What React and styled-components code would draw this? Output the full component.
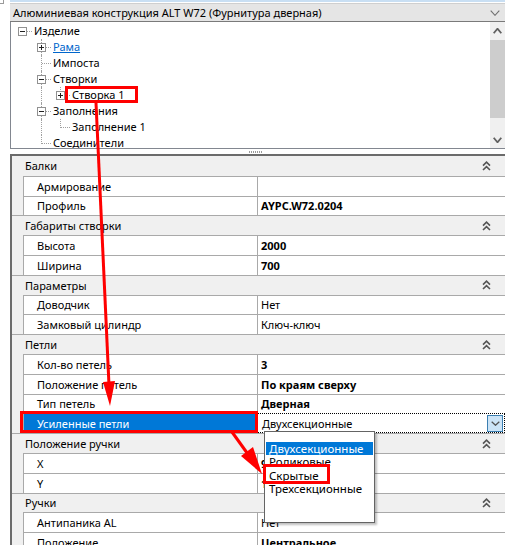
import React from 'react';
import styled, { createGlobalStyle } from 'styled-components';

const FONT = `"Noto Sans", "DejaVu Sans", sans-serif`;

const Global = createGlobalStyle`
  html, body { margin: 0; padding: 0; background: #fff; }
  body { font-family: ${FONT}; font-size: 11px; color: #000; }
`;

const Screen = styled.div`
  position: relative;
  width: 505px;
  height: 545px;
  overflow: hidden;
  background: #fff;
`;

const Corner = styled.div`
  position: absolute;
  left: 0;
  top: 0;
  width: 3px;
  height: 3px;
  border-right: 1px solid #9a9a9a;
  border-bottom: 1px solid #9a9a9a;
`;

const Panel = styled.div`
  margin-left: 10px;
  display: flex;
  flex-direction: column;
`;

const TopStrip = styled.div`
  height: 2px;
  background: #c9dff3;
  margin-bottom: 1px;
`;

const Header = styled.div`
  height: 19px;
  box-sizing: border-box;
  background: #e5e5e5;
  border-top: 1px solid #cfcfcf;
  border-bottom: 1px solid #7a7a7a;
  display: flex;
  align-items: center;
  justify-content: space-between;
  padding: 0 3px 0 3px;
  white-space: nowrap;
`;

const HeaderArrow = styled.span`
  display: flex;
  width: 15px;
  justify-content: center;
`;

const TreeBox = styled.div`
  height: 127px;
  box-sizing: border-box;
  display: flex;
  border-left: 1px solid #828790;
  border-bottom: 1px solid #828790;
`;

const TreeList = styled.div`
  flex: 1;
  padding: 1px 0 0 2px;
  overflow: hidden;
`;

const TreeRow = styled.div`
  display: flex;
  align-items: center;
  height: 16px;
`;

const Cell = styled.div`
  position: relative;
  width: 19px;
  height: 16px;
  flex: none;
`;

const VLine = styled.span`
  position: absolute;
  left: 9px;
  top: 0;
  height: ${p => (p.$half ? '9px' : '16px')};
  border-left: 1px dotted #a0a0a0;
`;

const HLine = styled.span`
  position: absolute;
  left: 10px;
  right: 0;
  top: 8px;
  border-top: 1px dotted #a0a0a0;
`;

const Expander = styled.span`
  position: absolute;
  left: 5px;
  top: 4px;
  width: 9px;
  height: 9px;
  box-sizing: border-box;
  border: 1px solid #919191;
  background: #fff;
  &::before {
    content: '';
    position: absolute;
    left: 1px;
    top: 3px;
    width: 5px;
    height: 1px;
    background: #222;
  }
  &::after {
    content: '';
    display: ${p => (p.$plus ? 'block' : 'none')};
    position: absolute;
    left: 3px;
    top: 1px;
    width: 1px;
    height: 5px;
    background: #222;
  }
`;

const TreeLabel = styled.span`
  margin-left: 2px;
  line-height: 16px;
  white-space: nowrap;
  color: ${p => (p.$link ? '#0066cc' : '#000')};
  text-decoration: ${p => (p.$link ? 'underline' : 'none')};
`;

const ScrollBar = styled.div`
  width: 15px;
  flex: none;
  background: #f0f0f0;
  display: flex;
  flex-direction: column;
`;

const ScrollBtn = styled.div`
  height: 17px;
  display: flex;
  align-items: center;
  justify-content: center;
  padding-right: 1px;
`;

const Thumb = styled.div`
  height: 78px;
  margin-top: 1px;
  background: #cdcdcd;
`;

const ScrollSpace = styled.div`
  flex: 1;
`;

const Splitter = styled.div`
  height: 5px;
  display: flex;
  align-items: center;
  justify-content: center;
`;

const Grip = styled.div`
  width: 14px;
  height: 2px;
  margin-left: -4px;
  background: repeating-linear-gradient(90deg, #9a9a9a 0 1px, transparent 1px 2px);
`;

const Grid = styled.div`
  border-top: 2px solid #6b6b6b;
  border-left: 2px solid #6b6b6b;
  background: #f0f0f0;
`;

const ROW_H = '19.8px';

const CatRow = styled.div`
  height: ${ROW_H};
  box-sizing: border-box;
  display: flex;
  align-items: center;
  justify-content: space-between;
  padding: 0 14px 0 13px;
  border-top: ${p => (p.$first ? 'none' : '1px solid #a9a9a9')};
  background: #f0f0f0;
`;

const PropRow = styled.div`
  height: ${ROW_H};
  display: flex;
`;

const Gutter = styled.div`
  width: 11px;
  flex: none;
  background: #f0f0f0;
`;

const NameCell = styled.div`
  width: 234px;
  flex: none;
  box-sizing: border-box;
  border-top: 1px solid #a9a9a9;
  border-left: 1px solid #a9a9a9;
  padding-left: 13px;
  display: flex;
  align-items: center;
  white-space: nowrap;
  background: ${p => (p.$selected ? '#0078d7' : '#fff')};
  color: ${p => (p.$selected ? '#fff' : '#000')};
`;

const ValueCell = styled.div`
  flex: 1;
  box-sizing: border-box;
  border-top: 1px solid #a9a9a9;
  border-left: 1px solid #a9a9a9;
  background: #fff;
  display: flex;
  align-items: center;
  white-space: nowrap;
  font-weight: ${p => (p.$bold ? 700 : 400)};
  padding-left: 3px;
`;

const EditCell = styled.div`
  flex: 1;
  box-sizing: border-box;
  border: 1px dotted #000;
  background: #fff;
  display: flex;
  align-items: center;
  padding-left: 4px;
  padding-right: 1px;
  white-space: nowrap;
`;

const EditText = styled.span`
  flex: 1;
`;

const DropBtn = styled.div`
  width: 16px;
  height: 17px;
  box-sizing: border-box;
  border: 1px solid #3c7fb1;
  background: #cce4f7;
  display: flex;
  align-items: center;
  justify-content: center;
`;

const DropList = styled.div`
  position: absolute;
  left: 264px;
  top: 431px;
  width: 111px;
  height: 92px;
  box-sizing: border-box;
  border: 1px solid #646464;
  background: #fff;
  padding: 10px 1px 0 1px;
  box-shadow: 2px 2px 2px rgba(0, 0, 0, 0.25);
`;

const DropItem = styled.div`
  height: 13.3px;
  line-height: 13px;
  padding-left: 3px;
  white-space: nowrap;
  font-size: 11.5px;
  background: ${p => (p.$selected ? '#0078d7' : 'transparent')};
  color: ${p => (p.$selected ? '#fff' : '#000')};
`;

const RedBox = styled.div`
  position: absolute;
  left: ${p => p.$x}px;
  top: ${p => p.$y}px;
  width: ${p => p.$w}px;
  height: ${p => p.$h}px;
  box-sizing: border-box;
  border: 3px solid #ff0000;
  pointer-events: none;
`;

const Arrows = styled.svg`
  position: absolute;
  left: 0;
  top: 0;
  pointer-events: none;
`;

const Chevron = ({ dir = 'down', color = '#606060', w = 9, h = 5, sw = 1.3 }) => (
  <svg width={w} height={h} viewBox={`0 0 ${w} ${h}`}>
    <path
      d={dir === 'down' ? `M0.7 0.7 L${w / 2} ${h - 0.7} L${w - 0.7} 0.7` : `M0.7 ${h - 0.7} L${w / 2} 0.7 L${w - 0.7} ${h - 0.7}`}
      stroke={color}
      strokeWidth={sw}
      fill="none"
    />
  </svg>
);

const Collapse = () => (
  <svg width="9" height="10" viewBox="0 0 9 10">
    <path d="M1 4.6 L4.5 1.2 L8 4.6 M1 9 L4.5 5.6 L8 9" stroke="#555" strokeWidth="1.6" fill="none" />
  </svg>
);

const tree = [
  { label: 'Изделие', guides: [], conn: 'root', exp: 'minus' },
  { label: 'Рама', guides: [false], conn: 'mid', exp: 'plus', link: true },
  { label: 'Импоста', guides: [false], conn: 'mid' },
  { label: 'Створки', guides: [false], conn: 'mid', exp: 'minus' },
  { label: 'Створка 1', guides: [false, true], conn: 'last', exp: 'plus' },
  { label: 'Заполнения', guides: [false], conn: 'mid', exp: 'minus' },
  { label: 'Заполнение 1', guides: [false, true], conn: 'last' },
  { label: 'Соединители', guides: [false], conn: 'last' },
];

const groups = [
  { title: 'Балки', rows: [['Армирование', ''], ['Профиль', 'AYPC.W72.0204', true]] },
  { title: 'Габариты створки', rows: [['Высота', '2000', true], ['Ширина', '700', true]] },
  { title: 'Параметры', rows: [['Доводчик', 'Нет'], ['Замковый цилиндр', 'Ключ-ключ']] },
  {
    title: 'Петли',
    rows: [
      ['Кол-во петель', '3', true],
      ['Положение петель', 'По краям сверху', true],
      ['Тип петель', 'Дверная', true],
      ['Усиленные петли', 'Двухсекционные', false, true],
    ],
  },
  { title: 'Положение ручки', rows: [['X', '900', true], ['Y', '1000', true]] },
  { title: 'Ручки', rows: [['Антипаника AL', 'Нет'], ['Положение', 'Центральное', true]] },
];

const options = ['Двухсекционные', 'Роликовые', 'Скрытые', 'Трехсекционные'];

function TreeItem({ item }) {
  return (
    <TreeRow>
      {item.guides.map((g, i) => (
        <Cell key={i}>{g && <VLine />}</Cell>
      ))}
      <Cell>
        {item.conn !== 'root' && <VLine $half={item.conn === 'last'} />}
        <HLine />
        {item.exp && <Expander $plus={item.exp === 'plus'} />}
      </Cell>
      <TreeLabel $link={item.link}>{item.label}</TreeLabel>
    </TreeRow>
  );
}

export default function App() {
  return (
    <Screen>
      <Global />
      <Corner />
      <Panel>
        <TopStrip />
        <Header>
          <span>Алюминиевая конструкция ALT W72 (Фурнитура дверная)</span>
          <HeaderArrow>
            <Chevron dir="down" w={10} h={6} sw={1.1} color="#707070" />
          </HeaderArrow>
        </Header>
        <TreeBox>
          <TreeList>
            {tree.map((t, i) => (
              <TreeItem key={i} item={t} />
            ))}
          </TreeList>
          <ScrollBar>
            <ScrollBtn>
              <Chevron dir="up" w={9} h={6} sw={1.8} />
            </ScrollBtn>
            <Thumb />
            <ScrollSpace />
            <ScrollBtn>
              <Chevron dir="down" w={9} h={6} sw={1.8} />
            </ScrollBtn>
          </ScrollBar>
        </TreeBox>
        <Splitter>
          <Grip />
        </Splitter>
        <Grid>
          {groups.map((g, gi) => (
            <React.Fragment key={gi}>
              <CatRow $first={gi === 0}>
                <span>{g.title}</span>
                <Collapse />
              </CatRow>
              {g.rows.map(([name, value, bold, selected], ri) => (
                <PropRow key={ri}>
                  <Gutter />
                  <NameCell $selected={selected}>{name}</NameCell>
                  {selected ? (
                    <EditCell>
                      <EditText>{value}</EditText>
                      <DropBtn>
                        <Chevron dir="down" w={9} h={5} sw={1.2} color="#505050" />
                      </DropBtn>
                    </EditCell>
                  ) : (
                    <ValueCell $bold={bold}>{value}</ValueCell>
                  )}
                </PropRow>
              ))}
            </React.Fragment>
          ))}
        </Grid>
      </Panel>

      <DropList>
        {options.map((o, i) => (
          <DropItem key={o} $selected={i === 0}>
            {o}
          </DropItem>
        ))}
      </DropList>

      <RedBox $x={65} $y={86} $w={73} $h={17} />
      <RedBox $x={20} $y={411} $w={238} $h={22} />
      <RedBox $x={263} $y={464} $w={67} $h={20} />

      <Arrows width="505" height="545" viewBox="0 0 505 545">
        <line x1="96" y1="103" x2="109" y2="385" stroke="#ff0000" strokeWidth="3" />
        <polygon points="110,406 115,381 103,382" fill="#ff0000" />
        <line x1="232" y1="432" x2="250" y2="457" stroke="#ff0000" strokeWidth="3" />
        <polygon points="262,474 253,447 241,456" fill="#ff0000" />
      </Arrows>
    </Screen>
  );
}
